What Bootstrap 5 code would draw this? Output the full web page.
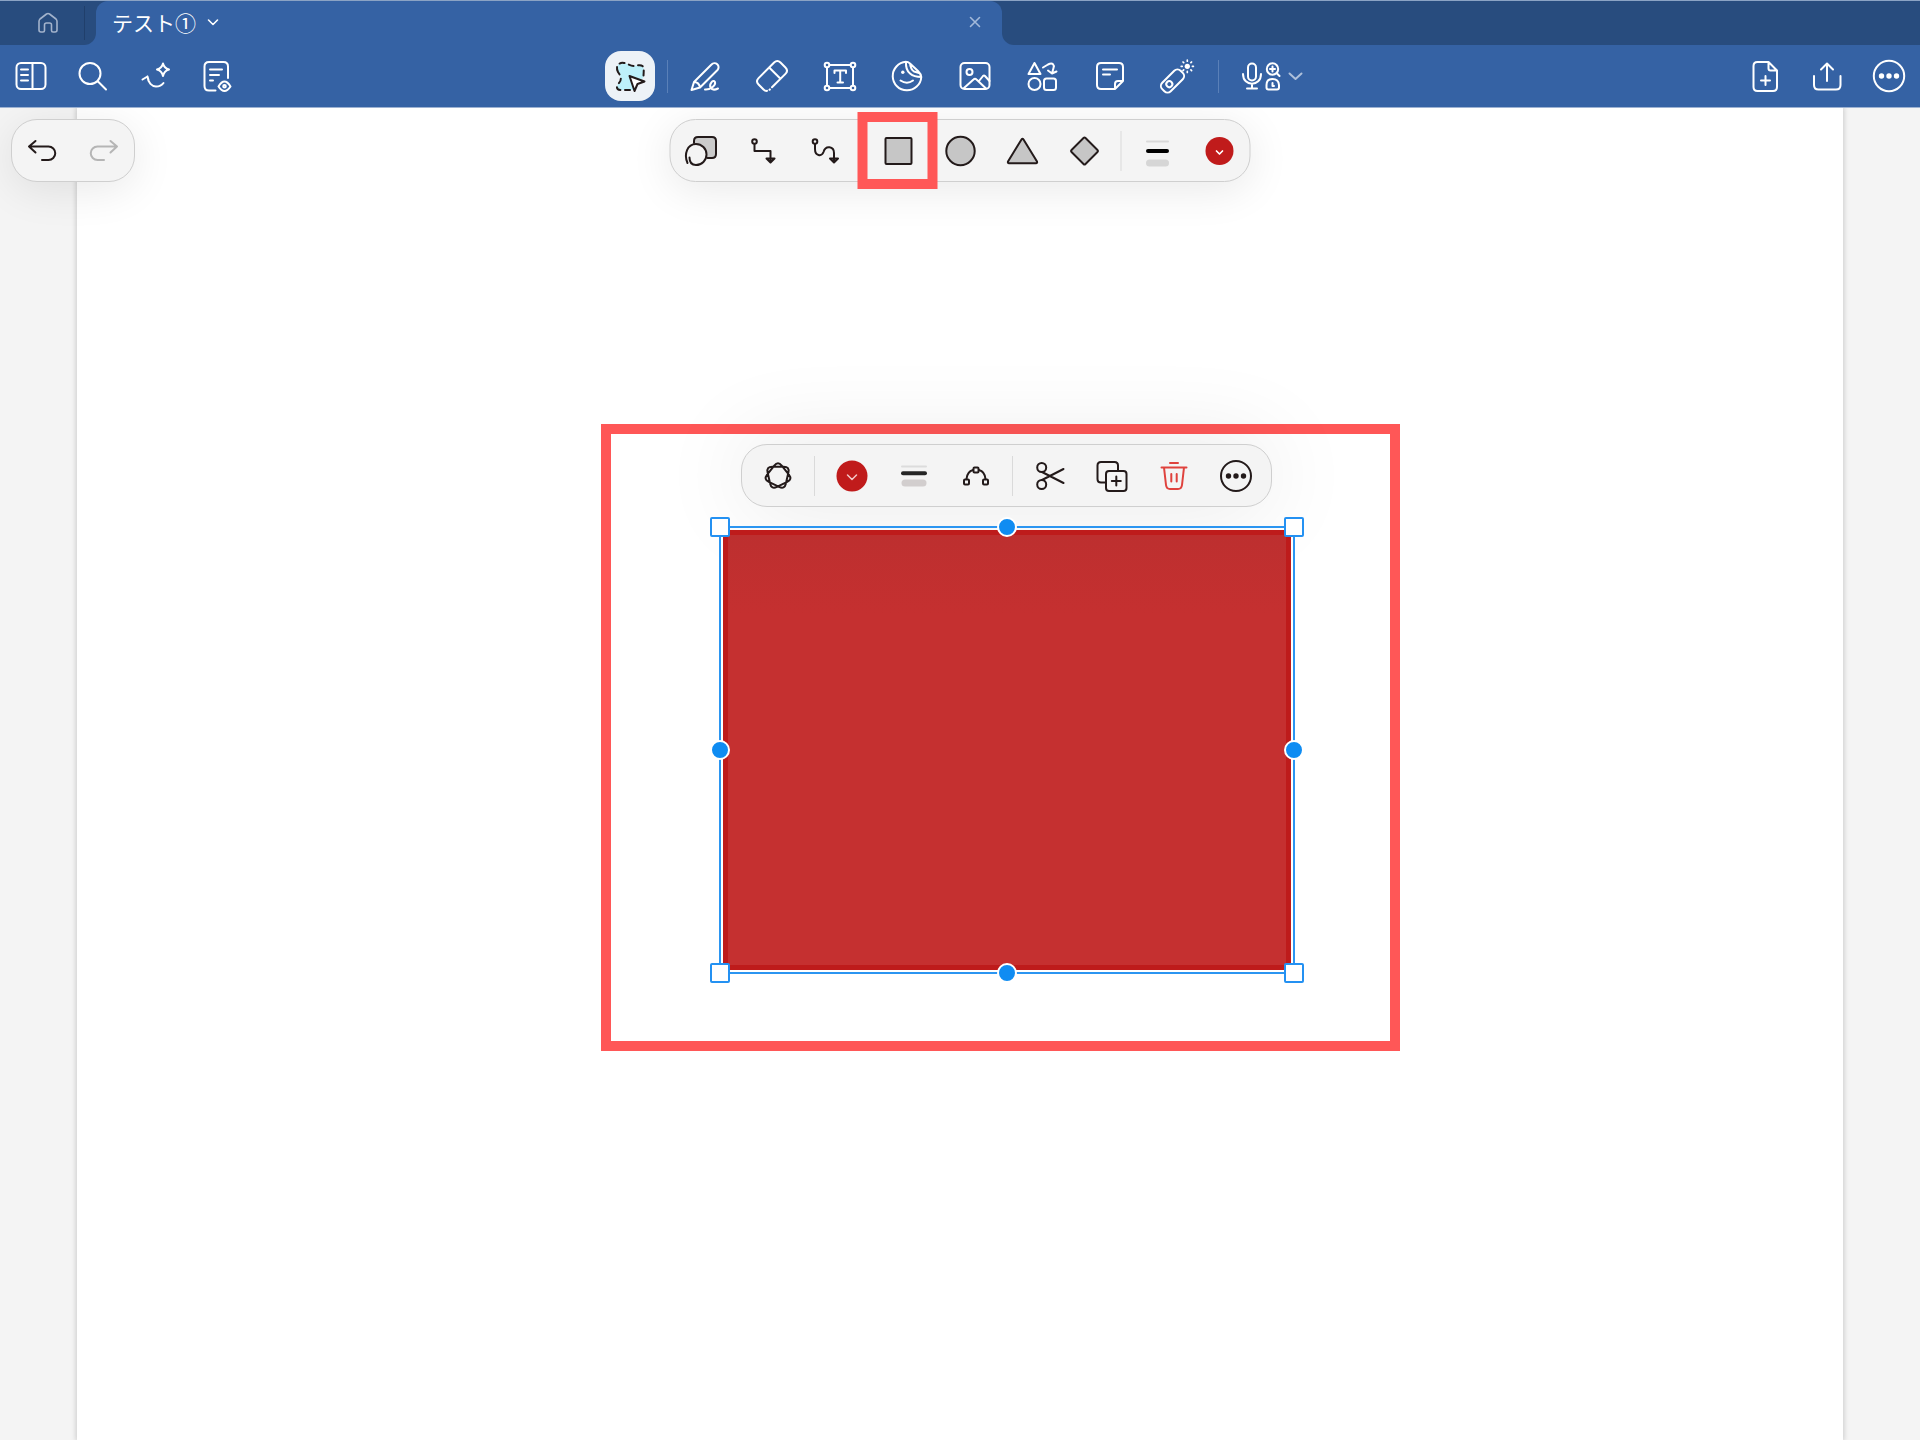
<!DOCTYPE html>
<html lang="ja">
<head>
<meta charset="utf-8">
<meta name="viewport" content="width=device-width, initial-scale=1">
<title>テスト①</title>
<link href="https://cdn.jsdelivr.net/npm/bootstrap@5.3.0/dist/css/bootstrap.min.css" rel="stylesheet">
<style>
  :root { --bar: #3562a4; --bar-dark: #284c7e; --ink: #231a1a; --mark: #ff5757; --sel: #0f8cf2; }
  body { font-family: "Liberation Sans", "Noto Sans CJK JP", sans-serif; background: #f4f4f4; }
  svg { fill: none; stroke: currentColor; stroke-width: 2; stroke-linecap: round; stroke-linejoin: round; display: block; flex: none; overflow: visible; }
  .fine { stroke-width: 1.6; }
  .solid { fill: currentColor; stroke: none; }
  .tool { width: 50px; height: 50px; padding: 0; border: 0; background: none; color: inherit; display: flex; align-items: center; justify-content: center; flex: none; position: relative; }
  .gap-tools { gap: 12px; }

  .tabstrip { height: 45px; background: var(--bar); border-top: 1px solid #8ba3c4; color: #fff; }
  .tab-home { width: 96px; background: var(--bar-dark); border-bottom-right-radius: 12px; color: #a3b3cc; position: relative; }
  .tab-home::after { content: ""; position: absolute; right: 11px; top: 5px; bottom: 5px; width: 1px; background: #203f6b; }
  .tab-home .tool { width: 96px; height: 44px; }
  .tab-wrap { flex: 0 1 906px; background: var(--bar-dark); }
  .tab-open { background: var(--bar); height: 100%; border-radius: 12px 12px 0 0; padding: 0 11px 2px 16px; }
  .tab-rest { background: var(--bar-dark); border-bottom-left-radius: 12px; }
  .tab-title { font-family: "Noto Sans CJK JP", sans-serif; font-size: 21px; line-height: 30px; color: #fff; background: none; border: 0; padding: 0; gap: 7px; }
  .tab-close { width: 32px; height: 32px; color: #a3b9da; }

  .toolstrip { background: var(--bar); border-bottom: 1px solid #9db2d2; color: #fff; padding: 6px; height: 63px; }
  .strip-side { flex: 1 1 0; }
  .lasso { background: #edf2f7; border-radius: 16px; color: var(--ink); }
  .bar-sep { width: 1px; height: 33px; background: #5a80b8; flex: none; }
  .draw-tools { width: 522px; }
  .rec { width: 80px; }

  .canvas { position: relative; overflow: hidden; }
  .paper { position: absolute; top: 0; bottom: 0; left: 4%; right: 4%; background: #fff; box-shadow: 0 0 5px 1px rgba(0,0,0,.17); }
  .pill { background: #f4f4f4; border: 1px solid #cfcfcf; border-radius: 26px; box-shadow: 0 8px 44px rgba(0,0,0,.09); color: var(--ink); height: 63px; padding: 0 5px; display: flex; align-items: center; }
  .pill-sep { width: 1px; height: 40px; background: #dadada; flex: none; }
  .floating-row { position: relative; padding: 11px; z-index: 2; }
  .shapes-pill { position: absolute; left: 50%; transform: translateX(-50%); top: 11px; }
  .sep-pad { margin: 0 11px; }
  .sep-wide { margin: 0 12px; }
  .sep-edit { margin: 0 12px 0 11px; }
  .mark-small { position: absolute; width: 80px; height: 77px; left: -16px; top: -14px; border: 10px solid var(--mark); pointer-events: none; }

  .mark-large { position: absolute; left: calc(50% - 359px); top: 316px; width: 799px; height: 627px; border: 10px solid var(--mark); }
  .edit-pill { position: absolute; left: calc(50% - 219px); top: 336px; padding: 0 10px 0 11px; z-index: 1; box-shadow: 0 0 90px rgba(0,0,0,.1); }
  .selection { position: absolute; left: calc(50% - 241px); top: 418px; width: 576px; height: 448px; border: 2px solid #2b95f1; padding: 2px; z-index: 2; }
  .red-shape { background: linear-gradient(#bd2f2f, #c53030 80px); border: 5px solid #be1b1b; height: 100%; }
  .knob { position: absolute; width: 20px; height: 20px; margin: -10px; }
  .corner { background: #fff; border: 2px solid #2491f2; border-radius: 2px; }
  .edge { background: var(--sel); border: 2px solid #fff; border-radius: 50%; }
  .k-l { left: -1px; } .k-c { left: 50%; } .k-r { left: calc(100% + 1px); }
  .k-t { top: -1px; } .k-m { top: 50%; } .k-b { top: calc(100% + 1px); }
  .danger-ink { color: #df423d; }
</style>
</head>
<body>
<div class="d-flex flex-column min-vh-100">

  <header class="tabstrip d-flex">
    <div class="tab-home">
      <button class="tool" type="button" aria-label="ホーム"><svg class="fine" width="40" height="40" viewBox="-20 -20 40 40"><path d="M-9 -1.500Q-9 -3 -8 -4L-1.500 -9Q0 -10 1.500 -9L8 -4Q9 -3 9 -1.500V7Q9 9 7 9H5Q3.500 9 3.500 7.500V2Q3.500 0 1.500 0H-1.500Q-3.500 0 -3.500 2V7.500Q-3.500 9 -5 9H-7Q-9 9 -9 7Z"/></svg></button>
    </div>
    <div class="tab-wrap">
      <div class="tab-open d-flex align-items-center justify-content-between">
        <button class="tab-title d-flex align-items-center" type="button">テスト①
          <svg class="fine" width="20" height="20" viewBox="-10 -10 20 20"><path d="M-4.500 -2L0 2.500L4.500 -2"/></svg></button>
        <button class="tool tab-close" type="button" aria-label="閉じる"><svg class="fine" width="20" height="20" viewBox="-10 -10 20 20"><path d="M-4.500 -4.500L4.500 4.500M4.500 -4.500L-4.500 4.500"/></svg></button>
      </div>
    </div>
    <div class="tab-rest flex-grow-1"></div>
  </header>

  <nav class="toolstrip d-flex align-items-center">
    <div class="strip-side d-flex gap-tools">
      <button class="tool" type="button" aria-label="サイドバー"><svg width="40" height="40" viewBox="-20 -20 40 40"><rect x="-14.500" y="-13" width="29" height="26" rx="4.500"/><path d="M1.500 -13V13M-10 -6.500H-3M-10 -1H-3M-10 4.500H-3"/></svg></button>
      <button class="tool" type="button" aria-label="検索"><svg width="40" height="40" viewBox="-20 -20 40 40"><circle cx="-3" cy="-2.500" r="10.500"/><path d="M5 5.500L13 13.500"/></svg></button>
      <button class="tool" type="button" aria-label="AI"><svg width="40" height="40" viewBox="-20 -20 40 40"><path d="M8 -12.500Q9 -8 14 -6.500Q9 -5 8 0Q7 -5 2 -6.500Q7 -8 8 -12.500Z"/><path d="M-12.500 3.500L-7.500 .5L-6.500 4M-7.500 .5C-7 7 -3 10.500 1 10.500C4 10.500 7 9 8.500 7"/></svg></button>
      <button class="tool" type="button" aria-label="表示"><svg width="40" height="40" viewBox="-20 -20 40 40"><path d="M-1.500 14.500H-8Q-12.500 14.500 -12.500 10V-9.500Q-12.500 -14 -8 -14H6.500Q11 -14 11 -9.500V2M-7 -6.500H5M-7 -1H2M-7 4.500H-4"/><path d="M1.500 10.500Q4.500 5.500 7.500 5.500T13.500 10.500Q10.500 15 7.500 15T1.500 10.500Z"/><circle cx="7.500" cy="10.300" r="1.300"/></svg></button>
    </div>

    <div class="d-flex align-items-center">
      <button class="tool lasso" type="button" aria-label="投げ縄"><svg width="40" height="40" viewBox="-20 -20 40 40"><path d="M-12 -4C-15 -10 -11 -14 -6 -13C-2 -12.500 0 -10 4 -10C7 -10 10 -12 12.500 -10C14.500 -8 13.500 -4 13.500 1L4 14H-9C-14 14 -14 10 -11 7C-8 4 -9 0 -12 -4Z" fill="#bdf0fa" stroke="none"/><path d="M-12 -4C-15 -10 -11 -14 -6 -13C-2 -12.500 0 -10 4 -10C7 -10 10 -12 12.500 -10C14.500 -8 13.500 -4 13.500 1M0 14H-9C-14 14 -14 10 -11 7C-8 4 -9 0 -12 -4" stroke-dasharray="5 4.500"/><path d="M-.5 0L14.500 5.500L7.500 8L4.500 15Z" fill="#fff"/></svg></button>
      <span class="bar-sep sep-wide"></span>
      <div class="draw-tools d-flex justify-content-between">
        <button class="tool" type="button" aria-label="ペン"><svg width="40" height="40" viewBox="-20 -20 40 40"><path d="M-13.500 14L-11 6L6.500 -11.500A4 4 0 0 1 12.500 -6L-5 11.500ZM-11 6Q-6 6 -5 11.500M-13.500 14L-10 13M0 13.500C6 14 11 9 10 6C8 3 4 8 5.500 11.500C7 14 10 14 13 12.500"/></svg></button>
        <button class="tool" type="button" aria-label="消しゴム"><svg width="40" height="40" viewBox="-20 -20 40 40"><g transform="rotate(-45)"><path d="M-8 8H11Q15.500 8 15.500 3.500V-3.500Q15.500 -8 11 -8H-11Q-15.500 -8 -15.500 -3.500V3.500Q-15.500 6 -14 7M-11.500 8H-11M4 -8V8"/></g></svg></button>
        <button class="tool" type="button" aria-label="テキスト"><svg width="40" height="40" viewBox="-20 -20 40 40"><path d="M-10 -11H10M-10 12H10M-13 -8V9M13 -8V9"/><circle cx="-13" cy="-11" r="2.300"/><circle cx="13" cy="-11" r="2.300"/><circle cx="-13" cy="12" r="2.300"/><circle cx="13" cy="12" r="2.300"/><path d="M-5.500 -3V-5.500H6V-3M.2 -5.500V6.500M-2.500 6.500H3"/></svg></button>
        <button class="tool" type="button" aria-label="ステッカー"><svg width="40" height="40" viewBox="-20 -20 40 40"><path d="M-1 -14.200A14.300 14.300 0 1 0 14.300 1Q14 -2 11 -5L3 -12.500Q1 -14.200 -1 -14.200Q-1.500 -6 3 -2.500Q7 1 14.300 1M3 -12.500Q3.500 -7 7 -4.500L12 -3M-6.500 4.500Q0 9 6 4.500"/><circle class="solid" cx="-4.200" cy="-3.700" r="1.700"/></svg></button>
        <button class="tool" type="button" aria-label="画像"><svg width="40" height="40" viewBox="-20 -20 40 40"><rect x="-14.500" y="-13" width="29" height="26" rx="4"/><circle cx="-5.500" cy="-4" r="3"/><path d="M-11 12L-1.500 3.500Q0 2 1.500 3.500L11 12.500M4 5L8 0Q9 -1 10 0L14.500 5"/></svg></button>
        <button class="tool" type="button" aria-label="図形"><svg width="40" height="40" viewBox="-20 -20 40 40"><path d="M-7.500 -13L-13.500 -2H-1.500ZM1 -8.500L6 -11.500C11 -14 12.500 -11 11.500 -8L10 -2.500M6 -5.500L10 -2.500L14.500 -4.500"/><circle cx="-7.500" cy="8" r="6"/><rect x="2" y="2.500" width="12" height="11.500" rx="2.500"/></svg></button>
        <button class="tool" type="button" aria-label="付箋"><svg width="40" height="40" viewBox="-20 -20 40 40"><path d="M5 13H-9Q-13 13 -13 9V-9Q-13 -13 -9 -13H9Q13 -13 13 -9V5L5 13V8Q5 5 8 5H13M-7 -6.500H7M-7 -1.500H0"/></svg></button>
        <button class="tool" type="button" aria-label="レーザー"><svg width="40" height="40" viewBox="-20 -20 40 40"><g transform="translate(-4.500 5) rotate(-45)"><rect x="-13" y="-6" width="26" height="12" rx="4.500"/><circle cx="-4.500" cy="0" r="3"/></g><circle class="solid" cx="10.300" cy="-9.700" r="2.600"/><path d="M10.300 -15.800v1M10.300 -4.600v1M4.200 -9.700h1M15.400 -9.700h1M6 -14l.7 .7M14.600 -14l-.7 .7M6 -5.400l.7 -.7M14.600 -5.400l-.7 -.7" stroke-width="1.700"/></svg></button>
      </div>
      <span class="bar-sep ms-3 me-3"></span>
      <button class="tool rec" type="button" aria-label="録音"><svg width="80" height="40" viewBox="-40 -20 80 40"><rect x="-27" y="-12.500" width="8" height="17" rx="4"/><path d="M-32 -2C-32 11 -14 11 -14 -2M-23 8V12.500M-28 12.500H-18"/><circle cx="-2.500" cy="-7" r="5.700"/><path d="M2 -2.500L4.500 0M-5 -7H0M-2.500 -9.500V-4.500M-8.500 9Q-8.500 3 -2.500 3T4 9V11.500Q4 13.500 2 13.500H-6.500Q-8.500 13.500 -8.500 11.500ZM-2.500 7V10H-1"/><path d="M14.500 -2.500L20.500 3L26.500 -2.500" opacity=".6"/></svg></button>
    </div>

    <div class="strip-side d-flex gap-tools justify-content-end">
      <button class="tool" type="button" aria-label="ページを追加"><svg width="40" height="40" viewBox="-20 -20 40 40"><path d="M3.500 -14H-7.500Q-11.500 -14 -11.500 -10V11Q-11.500 15 -7.500 15H8Q12 15 12 11V-5.500L3.500 -14V-7.500Q3.500 -5.500 5.500 -5.500H12M.5 0V9M-4 4.500H5"/></svg></button>
      <button class="tool" type="button" aria-label="共有"><svg width="40" height="40" viewBox="-20 -20 40 40"><path d="M0 5V-12.500M-6 -6.500L0 -12.500L6 -6.500M-13 0V9Q-13 13.500 -8.500 13.500H9Q13.500 13.500 13.500 9V0"/></svg></button>
      <button class="tool" type="button" aria-label="その他"><svg width="40" height="40" viewBox="-20 -20 40 40"><circle r="15.200"/><g class="solid"><circle cx="-7.500" r="2.700"/><circle r="2.700"/><circle cx="7.500" r="2.700"/></g></svg></button>
    </div>
  </nav>

  <main class="canvas flex-grow-1">
    <div class="paper"></div>

    <div class="floating-row d-flex">
      <div class="pill gap-tools">
        <button class="tool" type="button" aria-label="元に戻す"><svg width="40" height="40" viewBox="-20 -20 40 40"><path d="M-6.500 -10L-13 -4.500L-6.500 1.500M-13 -4.500H6.500A6.700 6.700 0 0 1 6.500 9H0"/></svg></button>
        <button class="tool" type="button" aria-label="やり直す"><svg width="40" height="40" viewBox="-20 -20 40 40" color="#b5b5b5"><path d="M6.500 -10L13 -4.500L6.500 1.500M13 -4.500H-6.500A6.700 6.700 0 0 0 -6.500 9H0"/></svg></button>
      </div>

      <div class="pill shapes-pill">
        <div class="d-flex gap-tools me-4">
          <button class="tool" type="button" aria-label="図形認識"><svg width="40" height="40" viewBox="-20 -20 40 40"><path d="M-6.500 -8V-10Q-6.500 -14 -2.500 -14H11.500Q15.500 -14 15.500 -10V3Q15.500 7 11.500 7H7" fill="#cbcbcb"/><circle cx="-4.500" cy="3.500" r="10.500" fill="#f4f4f4" stroke="none"/><path d="M-13 12C-17 3 -13 -7 -4.500 -7A10.500 10.500 0 1 1 -4.500 14C-8 14 -11 12 -11 6.500"/></svg></button>
          <button class="tool" type="button" aria-label="コネクタ"><svg width="40" height="40" viewBox="-20 -20 40 40"><circle cx="-8" cy="-9.500" r="2.300"/><path d="M-8 -7V0H8V11M4 7.500L8 11.500L12 7.500Z"/></svg></button>
          <button class="tool" type="button" aria-label="曲線コネクタ"><svg width="40" height="40" viewBox="-20 -20 40 40"><circle cx="-9.500" cy="-9.500" r="2.300"/><path d="M-9.500 -7V-2C-9.500 5 -3 6 -1 1C1 -6 9.500 -5 9.500 2V11M5.500 7.500L9.500 11.500L13.500 7.500Z"/></svg></button>
        </div>
        <div class="d-flex gap-tools">
          <button class="tool" type="button" aria-label="四角形"><svg width="40" height="40" viewBox="-20 -20 40 40"><rect x="-13" y="-13" width="26" height="26" rx="1" fill="#c6c6c6"/></svg><span class="mark-small"></span></button>
          <button class="tool" type="button" aria-label="円"><svg width="40" height="40" viewBox="-20 -20 40 40"><circle r="14.200" fill="#c6c6c6"/></svg></button>
          <button class="tool" type="button" aria-label="三角形"><svg width="40" height="40" viewBox="-20 -20 40 40"><path d="M-1 -11.500Q0 -13 1 -11.500L14.500 10.500Q15 12.300 13.500 12.300H-13.500Q-15 12.300 -14.500 10.500Z" fill="#c6c6c6"/></svg></button>
          <button class="tool" type="button" aria-label="ひし形"><svg width="40" height="40" viewBox="-20 -20 40 40"><path d="M-1 -13Q0 -14 1 -13L13 -1Q14 0 13 1L1 13Q0 14 -1 13L-13 1Q-14 0 -13 -1Z" fill="#c6c6c6"/></svg></button>
        </div>
        <span class="pill-sep sep-pad"></span>
        <div class="d-flex gap-tools">
          <button class="tool" type="button" aria-label="線の太さ"><svg width="40" height="40" viewBox="-20 -20 40 40"><path d="M-10.500 -9.500H10.500" stroke="#d9d9d9"/><path d="M-9.500 0H9.500" stroke="#000" stroke-width="4"/><path d="M-8 12H8" stroke="#d6d6d6" stroke-width="7"/></svg></button>
          <button class="tool" type="button" aria-label="色"><svg width="40" height="40" viewBox="-20 -20 40 40"><circle r="14" fill="#c01b1b" stroke="none"/><path d="M-3 0L0 3L3 0" stroke="#fff" stroke-width="1.700"/></svg></button>
        </div>
      </div>
    </div>

    <div class="mark-large"></div>

    <div class="pill edit-pill">
      <button class="tool" type="button" aria-label="スタイル"><svg width="40" height="40" viewBox="-20 -20 40 40"><path d="M-3.740 -10.300Q0 -15 3.740 -10.300L10.880 -1.360Q14.620 3.340 9.210 5.940L-1.100 10.910Q-6.510 13.510 -7.850 7.660L-10.390 -3.500Q-11.730 -9.350 -5.720 -9.350L5.720 -9.350Q11.730 -9.350 10.390 -3.500L7.850 7.660Q6.510 13.510 1.100 10.910L-9.210 5.940Q-14.620 3.340 -10.880 -1.360Z"/></svg></button>
      <span class="pill-sep sep-edit"></span>
      <div class="d-flex gap-tools">
        <button class="tool" type="button" aria-label="塗り色"><svg width="40" height="40" viewBox="-20 -20 40 40"><circle r="15.500" fill="#c01b1b" stroke="none"/><path d="M-4.500 -1L0 3.500L4.500 -1" stroke="#f3c9c9" stroke-width="1.500"/></svg></button>
        <button class="tool" type="button" aria-label="枠線"><svg width="40" height="40" viewBox="-20 -20 40 40"><path d="M-12 -9.500H12" stroke="#dcdcdc"/><path d="M-11 -2.700H11" stroke="#262626" stroke-width="4"/><path d="M-9 7H9" stroke="#d2cece" stroke-width="7"/></svg></button>
        <button class="tool" type="button" aria-label="ポイント編集"><svg width="40" height="40" viewBox="-20 -20 40 40"><rect x="-12" y="3.500" width="5" height="5" rx="1"/><rect x="7" y="3.500" width="5" height="5" rx="1"/><rect x="-2.500" y="-8.500" width="5" height="5" rx="1"/><path d="M-9.500 3C-9 -2 -7 -5 -3 -6M9.500 3C9 -2 7 -5 3 -6"/></svg></button>
      </div>
      <span class="pill-sep sep-edit"></span>
      <div class="d-flex gap-tools">
        <button class="tool" type="button" aria-label="切り取り"><svg width="40" height="40" viewBox="-20 -20 40 40"><circle cx="-8.300" cy="-8.500" r="4.500"/><circle cx="-8.300" cy="8.500" r="4.500"/><path d="M-8 -4L13.500 7M-8 4L13.500 -7"/></svg></button>
        <button class="tool" type="button" aria-label="複製"><svg width="40" height="40" viewBox="-20 -20 40 40"><path d="M-6 6.500H-11Q-14.500 6.500 -14.500 3V-10.500Q-14.500 -14 -11 -14H2.500Q6 -14 6 -10.500V-5.500"/><rect x="-6" y="-5" width="20.500" height="20" rx="3"/><path d="M4.300 .5V9.500M-.2 5H8.800"/></svg></button>
        <button class="tool danger-ink" type="button" aria-label="削除"><svg width="40" height="40" viewBox="-20 -20 40 40"><path d="M-12.500 -8.500H12.500M-4 -13H4M-10 -8.500L-8 9Q-7.500 13 -4 13H4Q7.500 13 8 9L10 -8.500M-2.700 -2V5.500M2.700 -2V5.500"/></svg></button>
        <button class="tool" type="button" aria-label="その他の操作"><svg width="40" height="40" viewBox="-20 -20 40 40"><circle r="15"/><g class="solid"><circle cx="-7.500" r="2.700"/><circle r="2.700"/><circle cx="7.500" r="2.700"/></g></svg></button>
      </div>
    </div>

    <div class="selection">
      <div class="red-shape"></div>
      <span class="knob corner k-l k-t"></span>
      <span class="knob edge k-c k-t"></span>
      <span class="knob corner k-r k-t"></span>
      <span class="knob edge k-l k-m"></span>
      <span class="knob edge k-r k-m"></span>
      <span class="knob corner k-l k-b"></span>
      <span class="knob edge k-c k-b"></span>
      <span class="knob corner k-r k-b"></span>
    </div>
  </main>
</div>
<script src="https://cdn.jsdelivr.net/npm/bootstrap@5.3.0/dist/js/bootstrap.bundle.min.js"></script>
</body>
</html>
